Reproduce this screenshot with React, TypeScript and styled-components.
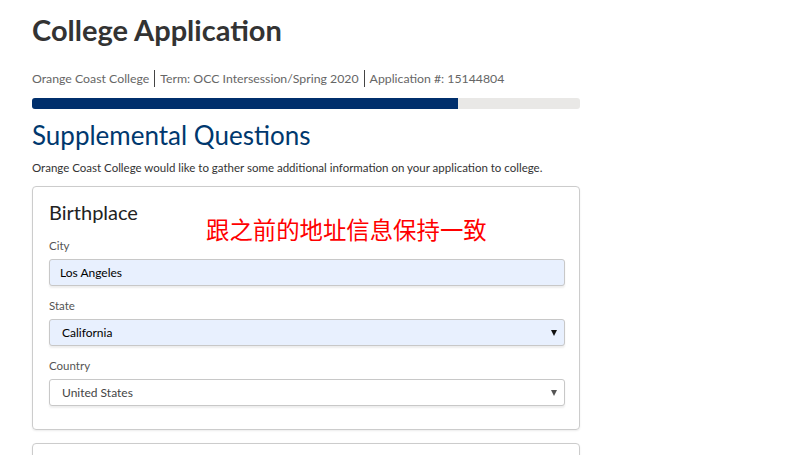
import React from "react";
import styled, { createGlobalStyle } from "styled-components";

const Global = createGlobalStyle`
  html, body { margin: 0; padding: 0; background: #fff; }
  body { font-family: Lato, "Open Sans", sans-serif; color: #333; }
`;

const Page = styled.div`
  width: 548px;
  padding: 0 0 0 32px;
`;

const Title = styled.h1`
  margin: 12px 0 0;
  font-size: 29px;
  line-height: 36px;
  font-weight: 700;
  color: #333;
`;

const Meta = styled.div`
  margin-top: 22px;
  display: flex;
  align-items: center;
  font-size: 12.3px;
  line-height: 17px;
  color: #666;
`;

const MetaItem = styled.span<{ $first?: boolean }>`
  padding: 0 5px;
  ${(p) => (p.$first ? "padding-left: 0;" : "border-left: 1px solid #444;")}
`;

const Track = styled.div`
  margin-top: 11px;
  height: 11px;
  border-radius: 3px;
  background: #e9e8e6;
  overflow: hidden;
`;

const Fill = styled.div`
  height: 100%;
  background: #002f6c;
`;

const Heading = styled.h2`
  margin: 10px 0 0;
  font-size: 26px;
  line-height: 32px;
  font-weight: 400;
  color: #00386e;
`;

const Intro = styled.p`
  margin: 9px 0 0;
  font-size: 11.5px;
  line-height: 16px;
  color: #333;
`;

const Card = styled.section<{ $empty?: boolean }>`
  position: relative;
  margin-top: ${(p) => (p.$empty ? "13px" : "10px")};
  border: 1px solid #ccc;
  border-radius: 4px;
  box-shadow: 0 1px 2px rgba(0, 0, 0, 0.08);
  padding: 13px 14px 23px 16px;
  ${(p) => (p.$empty ? "height: 40px; padding: 0;" : "")}
`;

const CardTitle = styled.h3`
  margin: 0 0 14px;
  font-size: 20px;
  line-height: 24px;
  font-weight: 400;
  color: #222;
`;

const Note = styled.div`
  position: absolute;
  left: 173px;
  top: 28px;
  font-family: "Noto Sans CJK SC", sans-serif;
  font-size: 23.4px;
  line-height: 28px;
  color: #ff0000;
`;

const Field = styled.div`
  & + & { margin-top: 12px; }
`;

const Label = styled.div`
  font-size: 11.5px;
  line-height: 16px;
  color: #555;
  margin-bottom: 5px;
`;

const Box = styled.div<{ $filled?: boolean; $select?: boolean }>`
  position: relative;
  box-sizing: border-box;
  height: 27px;
  display: flex;
  align-items: center;
  padding: 0 ${(p) => (p.$select ? "12px" : "10px")};
  border: 1px solid #c8c8c8;
  border-radius: 3px;
  background: ${(p) => (p.$filled ? "#e8f0fe" : "#fff")};
  box-shadow: 0 2px 2px rgba(0, 0, 0, 0.07);
  font-size: 12px;
  color: ${(p) => (p.$filled ? "#000" : "#444")};
`;

const Arrow = styled.svg<{ $dark?: boolean }>`
  position: absolute;
  right: 7px;
  top: 10px;
  width: 6px;
  height: 6px;
  fill: ${(p) => (p.$dark ? "#111" : "#555")};
`;

function Caret({ dark }: { dark?: boolean }) {
  return (
    <Arrow $dark={dark} viewBox="0 0 6 6">
      <polygon points="0,0 6,0 3,6" />
    </Arrow>
  );
}

export default function App() {
  return (
    <>
      <Global />
      <Page>
        <Title>College Application</Title>
        <Meta>
          <MetaItem $first>Orange Coast College</MetaItem>
          <MetaItem>Term: OCC Intersession/Spring 2020</MetaItem>
          <MetaItem>Application #: 15144804</MetaItem>
        </Meta>
        <Track>
          <Fill style={{ width: `${(426 / 548) * 100}%` }} />
        </Track>
        <Heading>Supplemental Questions</Heading>
        <Intro>
          Orange Coast College would like to gather some additional information on your application to college.
        </Intro>
        <Card>
          <CardTitle>Birthplace</CardTitle>
          <Note>跟之前的地址信息保持一致</Note>
          <Field>
            <Label>City</Label>
            <Box $filled>Los Angeles</Box>
          </Field>
          <Field>
            <Label>State</Label>
            <Box $filled $select>
              California
              <Caret dark />
            </Box>
          </Field>
          <Field>
            <Label>Country</Label>
            <Box $select>
              United States
              <Caret />
            </Box>
          </Field>
        </Card>
        <Card $empty />
      </Page>
    </>
  );
}
